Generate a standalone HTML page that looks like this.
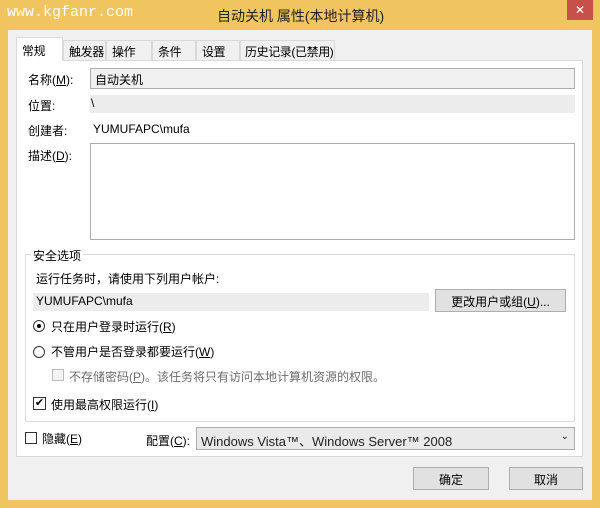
<!DOCTYPE html>
<html><head><meta charset="utf-8"><style>
*{box-sizing:border-box;margin:0;padding:0}
body{width:600px;height:508px;background:#f0c45e;position:relative;overflow:hidden;font-family:"Liberation Sans","Noto Sans CJK SC",sans-serif;font-size:12px;color:#000}
.a{position:absolute}
.client{left:8px;top:30px;width:584px;height:470px;background:#f0f0f0}
.panel{left:16px;top:60px;width:567px;height:397px;background:#fff;border:1px solid #d9d9d9}
.tab{top:40px;height:20px;background:#f0f0f0;border:1px solid #d9d9d9;border-bottom:none;padding:2px 0 0 5px;font-size:12px;white-space:nowrap;overflow:hidden;letter-spacing:-0.4px}
.sel{top:37px;height:24px;background:#fff;z-index:2;padding-top:4px}
.grey{background:#ececec}
.field{border:1px solid #acacac;background:#f0f0f0}
.btn{background:#e1e1e1;border:1px solid #adadad;text-align:center;padding-top:3px}
.lbl{white-space:nowrap}
</style></head><body>
<div class="a lbl" style="left:7px;top:4px;color:#fff;font-family:'Liberation Mono',monospace;font-size:15px">www.kgfanr.com</div>
<div class="a lbl" style="left:217px;top:6px;font-size:14px;color:#222">自动关机 属性(本地计算机)</div>
<div class="a" style="left:567px;top:0;width:26px;height:20px;background:#c7504a;color:#fff;text-align:center;font-size:12px;line-height:20px">✕</div>
<div class="a client"></div>
<div class="a tab sel" style="left:16px;width:47px">常规</div>
<div class="a tab" style="left:63px;width:43px">触发器</div>
<div class="a tab" style="left:106px;width:46px">操作</div>
<div class="a tab" style="left:152px;width:44px">条件</div>
<div class="a tab" style="left:196px;width:44px">设置</div>
<div class="a tab" style="left:240px;width:95px;padding-left:4px">历史记录(已禁用)</div>
<div class="a panel"></div>
<div class="a lbl" style="left:28px;top:71px">名称(<u>M</u>):</div>
<div class="a field" style="left:90px;top:68px;width:485px;height:21px;padding:2px 4px">自动关机</div>
<div class="a lbl" style="left:28px;top:97px">位置:</div>
<div class="a grey" style="left:90px;top:95px;width:485px;height:18px;padding:1px 1px">\</div>
<div class="a lbl" style="left:28px;top:122px">创建者:</div>
<div class="a lbl" style="left:93px;top:122px">YUMUFAPC\mufa</div>
<div class="a lbl" style="left:28px;top:147px">描述(<u>D</u>):</div>
<div class="a" style="left:90px;top:143px;width:485px;height:97px;border:1px solid #acacac;background:#fff"></div>
<div class="a" style="left:25px;top:254px;width:550px;height:168px;border:1px solid #dcdcdc"></div>
<div class="a lbl" style="left:31px;top:247px;background:#fff;padding:0 2px">安全选项</div>
<div class="a lbl" style="left:36px;top:270px">运行任务时，请使用下列用户帐户:</div>
<div class="a grey lbl" style="left:33px;top:293px;width:396px;height:18px;padding:1px 3px">YUMUFAPC\mufa</div>
<div class="a btn lbl" style="left:435px;top:289px;width:131px;height:23px">更改用户或组(<u>U</u>)...</div>
<div class="a" style="left:33px;top:320px;width:12px;height:12px;border:1px solid #333;border-radius:50%;background:#fff"><div class="a" style="left:3px;top:3px;width:4px;height:4px;border-radius:50%;background:#000"></div></div>
<div class="a lbl" style="left:51px;top:318px">只在用户登录时运行(<u>R</u>)</div>
<div class="a" style="left:33px;top:346px;width:12px;height:12px;border:1px solid #333;border-radius:50%;background:#fff"></div>
<div class="a lbl" style="left:51px;top:343px">不管用户是否登录都要运行(<u>W</u>)</div>
<div class="a" style="left:52px;top:369px;width:12px;height:12px;border:1px solid #bcbcbc;background:#f4f4f4"></div>
<div class="a lbl" style="left:69px;top:368px;color:#6d6d6d">不存储密码(<u>P</u>)。该任务将只有访问本地计算机资源的权限。</div>
<div class="a" style="left:33px;top:397px;width:13px;height:13px;border:1px solid #333;background:#fff;font-size:11px;line-height:11px;text-align:center">✔</div>
<div class="a lbl" style="left:51px;top:396px">使用最高权限运行(<u>I</u>)</div>
<div class="a" style="left:25px;top:432px;width:12px;height:12px;border:1px solid #333;background:#fff"></div>
<div class="a lbl" style="left:42px;top:430px">隐藏(<u>E</u>)</div>
<div class="a lbl" style="left:146px;top:432px">配置(<u>C</u>):</div>
<div class="a field lbl" style="left:196px;top:427px;width:379px;height:23px;padding:3px 4px;font-size:13px;color:#222;background:#eaeaea">Windows Vista™、Windows Server™ 2008<span style="position:absolute;right:5px;top:3px;font-size:10px">⌄</span></div>
<div class="a btn" style="left:413px;top:467px;width:76px;height:23px">确定</div>
<div class="a btn" style="left:509px;top:467px;width:74px;height:23px">取消</div>
</body></html>
